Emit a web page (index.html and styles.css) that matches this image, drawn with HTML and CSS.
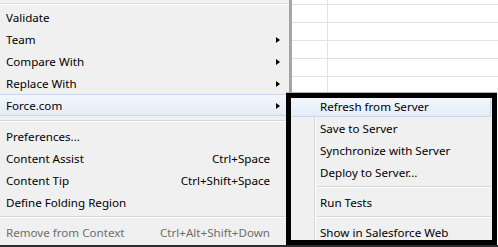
FILE: index.html
```html
<!DOCTYPE html>
<html>
<head>
<meta charset="utf-8">
<link rel="stylesheet" href="styles.css">
</head>
<body>
<div class="screen">
  <div class="top">
    <div class="menu">
      <div class="sep sep-top"></div>
      <div class="item"><span class="label">Validate</span><span class="key"></span><span class="arrow-col"></span></div>
      <div class="item"><span class="label">Team</span><span class="key"></span><span class="arrow-col"><i class="arrow"></i></span></div>
      <div class="item"><span class="label">Compare With</span><span class="key"></span><span class="arrow-col"><i class="arrow"></i></span></div>
      <div class="item"><span class="label">Replace With</span><span class="key"></span><span class="arrow-col"><i class="arrow"></i></span></div>
      <div class="item hot"><span class="label">Force.com</span><span class="key"></span><span class="arrow-col"><i class="arrow"></i></span></div>
      <div class="sep sep-mid"></div>
      <div class="item"><span class="label">Preferences...</span><span class="key"></span><span class="arrow-col"></span></div>
      <div class="item"><span class="label">Content Assist</span><span class="key">Ctrl+Space</span><span class="arrow-col"></span></div>
      <div class="item"><span class="label">Content Tip</span><span class="key">Ctrl+Shift+Space</span><span class="arrow-col"></span></div>
      <div class="item"><span class="label">Define Folding Region</span><span class="key"></span><span class="arrow-col"></span></div>
      <div class="sep"></div>
      <div class="item disabled"><span class="label">Remove from Context</span><span class="key">Ctrl+Alt+Shift+Down</span><span class="arrow-col"></span></div>
    </div>
    <div class="table">
      <div class="row r0"><div class="c1"></div><div class="c2"></div></div>
      <div class="row"><div class="c1"></div><div class="c2"></div></div>
      <div class="row"><div class="c1"></div><div class="c2"></div></div>
      <div class="row"><div class="c1"></div><div class="c2"></div></div>
      <div class="row"><div class="c1"></div><div class="c2"></div></div>
      <div class="row"><div class="c1"></div><div class="c2"></div></div>
    </div>
  </div>
  <div class="taskbar"></div>

  <div class="submenu">
    <div class="subinner">
      <div class="sitem hot first">Refresh from Server</div>
      <div class="sitem">Save to Server</div>
      <div class="sitem">Synchronize with Server</div>
      <div class="sitem">Deploy to Server...</div>
      <div class="ssep"></div>
      <div class="sitem">Run Tests</div>
      <div class="ssep"></div>
      <div class="sitem">Show in Salesforce Web</div>
    </div>
  </div>
</div>
</body>
</html>
```

FILE: styles.css
```css
html, body {
  margin: 0;
  padding: 0;
  width: 498px;
  height: 247px;
  overflow: hidden;
  background: #ffffff;
}

.screen {
  position: relative;
  width: 498px;
  height: 247px;
  display: flex;
  flex-direction: column;
  font-family: "Noto Sans", "Open Sans", sans-serif;
  font-size: 11.6px;
  color: #000;
}

.top {
  display: flex;
  height: 245px;
}

.menu {
  width: 289px;
  background: #f0f0f0;
  border-right: 3px solid #a5a5a5;
  box-sizing: content-box;
  display: flex;
  flex-direction: column;
}

.sep {
  height: 8px;
  box-sizing: border-box;
  padding-top: 3px;
}
.sep::before {
  content: "";
  display: block;
  height: 1px;
  background: #d9d9d9;
  border-bottom: 1px solid #ffffff;
}
.sep-top {
  height: 6px;
  padding-top: 3px;
}
.sep-mid {
  height: 9px;
  padding-top: 4px;
}

.item {
  height: 22px;
  line-height: 23px;
  display: grid;
  grid-template-columns: 1fr auto 19px;
  padding-left: 6px;
  box-sizing: border-box;
  white-space: nowrap;
}
.item.hot {
  background: linear-gradient(#f3f7fc, #e4ecf7);
  border-top: 1px solid #c5d8ee;
  border-bottom: 1px solid #c5d8ee;
  line-height: 21px;
}
.item.disabled {
  color: #6d6d6d;
}
.key {
  text-align: right;
}
.arrow-col {
  display: flex;
  align-items: center;
  padding-left: 6px;
}
.arrow {
  display: block;
  width: 0;
  height: 0;
  border-top: 3.5px solid transparent;
  border-bottom: 3.5px solid transparent;
  border-left: 4px solid #000;
}

.table {
  flex: 1;
  display: flex;
  flex-direction: column;
  background: #ffffff;
}
.row {
  display: flex;
  height: 18px;
  border-bottom: 1px solid #e2e2e2;
  box-sizing: border-box;
}
.row.r0 {
  height: 5px;
}
.c1 {
  width: 36px;
  border-right: 1px solid #e2e2e2;
  box-sizing: border-box;
}
.c2 {
  flex: 1;
}

.taskbar {
  height: 2px;
  background: #2a2e33;
}

.submenu {
  position: absolute;
  left: 286px;
  top: 93px;
  width: 211px;
  height: 152px;
  box-sizing: border-box;
  border: 5px solid #000;
  box-shadow: 0 -1px 0 #b0b0b0;
  background: #f0f0f0;
  overflow: hidden;
}
.subinner {
  height: 142px;
  overflow: hidden;
  background:
    linear-gradient(#d8d8d8, #d8d8d8) 23px 0 / 1px 100% no-repeat,
    linear-gradient(#ffffff, #ffffff) 24px 0 / 1px 100% no-repeat,
    #f0f0f0;
}
.sitem {
  height: 22px;
  line-height: 23px;
  padding-left: 29px;
  white-space: nowrap;
  box-sizing: border-box;
}
.sitem.first {
  height: 19px;
  line-height: 18px;
}
.sitem.hot {
  background: linear-gradient(#f3f7fc, #e4ecf7);
  border-bottom: 1px solid #c5d8ee;
  border-right: 1px solid #c5d8ee;
  margin-right: 1px;
}
.ssep {
  height: 8px;
  box-sizing: border-box;
  padding-top: 3px;
  padding-left: 26px;
}
.ssep::before {
  content: "";
  display: block;
  height: 1px;
  background: #d9d9d9;
  border-bottom: 1px solid #ffffff;
}
```
